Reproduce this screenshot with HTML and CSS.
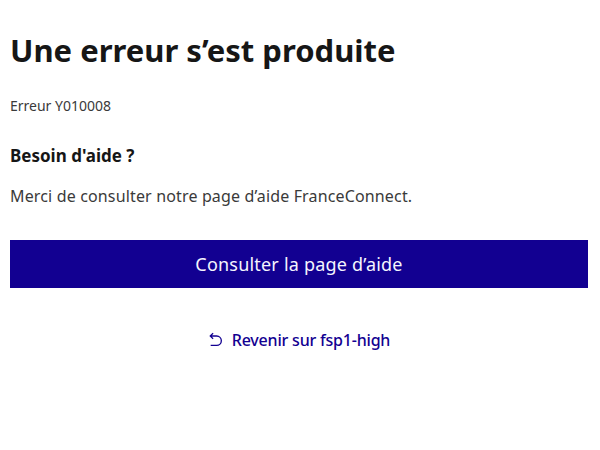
FILE: index.html
```html
<!DOCTYPE html>
<html lang="fr">
<head>
<meta charset="utf-8">
<link rel="stylesheet" href="styles.css">
</head>
<body>
<main class="page">
  <h1 class="title">Une erreur s’est produite</h1>
  <p class="code">Erreur Y010008</p>
  <h2 class="help-title">Besoin d'aide ?</h2>
  <p class="help-text">Merci de consulter notre page d’aide FranceConnect.</p>
  <a class="btn" href="#">Consulter la page d’aide</a>
  <div class="back">
    <a class="back-link" href="#">
      <svg class="back-icon" viewBox="0 0 24 24" width="16" height="16" aria-hidden="true"><path fill="currentColor" d="M5.828 7l2.536 2.536L6.95 10.95 2 6l4.95-4.95 1.414 1.414L5.828 5H13a8 8 0 1 1 0 16H4v-2h9a6 6 0 1 0 0-12H5.828z"/></svg>
      <span>Revenir sur fsp1-high</span>
    </a>
  </div>
</main>
</body>
</html>
```

FILE: styles.css
```css
html, body {
  margin: 0;
  padding: 0;
  background: #ffffff;
}
body {
  font-family: "Noto Sans", Lato, sans-serif;
  color: #3a3a3a;
}
.page {
  padding: 30px 12px 0 10px;
  display: flex;
  flex-direction: column;
}
.title {
  margin: 0;
  font-size: 31px;
  line-height: 40px;
  font-weight: 700;
  color: #161616;
}
.code {
  margin: 26px 0 0 0;
  font-size: 14px;
  line-height: 20px;
  color: #3a3a3a;
}
.help-title {
  margin: 28px 0 0 0;
  font-size: 17px;
  line-height: 24px;
  font-weight: 700;
  color: #161616;
}
.help-text {
  margin: 16px 0 0 0;
  font-size: 16px;
  line-height: 24px;
  letter-spacing: 0.15px;
  color: #3a3a3a;
}
.btn {
  margin-top: 32px;
  height: 48px;
  display: flex;
  align-items: center;
  justify-content: center;
  background: #120091;
  color: #f5f5fe;
  font-size: 18px;
  letter-spacing: 0.2px;
  text-decoration: none;
}
.back {
  margin-top: 40px;
  display: flex;
  justify-content: center;
}
.back-link {
  display: flex;
  align-items: center;
  gap: 8px;
  color: #120091;
  text-decoration: none;
  font-size: 16px;
  line-height: 24px;
  letter-spacing: -0.2px;
  font-weight: 500;
}
.back-icon {
  display: block;
}
```
